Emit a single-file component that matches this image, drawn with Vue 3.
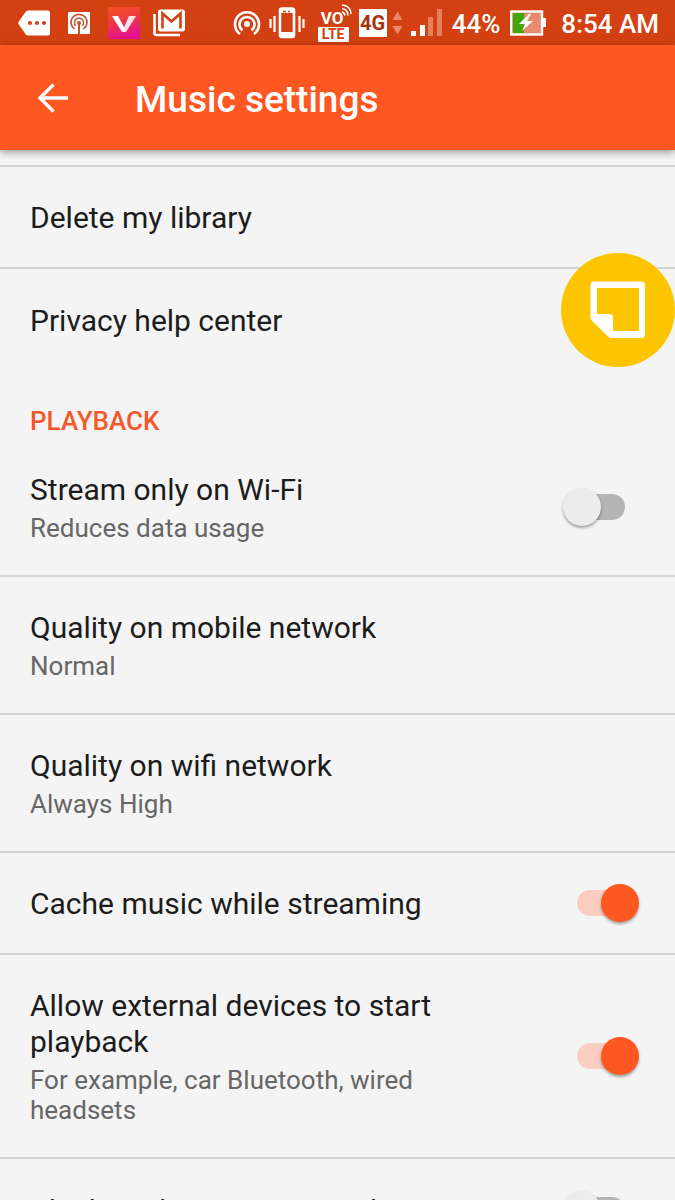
<template>
  <div class="screen">
    <div class="status-bar">
      <div class="status-icons">
        <svg class="icon-tag" width="32" height="26" viewBox="0 0 32 26">
          <path d="M10 0.5H30Q32 0.5 32 2.5V23.5Q32 25.5 30 25.5H10Q8.500 25.500 7.500 24L0.500 14Q0 13 0.500 12L7.500 2Q8.500 0.500 10 0.500Z" fill="#fff" />
          <g fill="#d34113">
            <circle cx="12" cy="13" r="2.100" />
            <circle cx="19" cy="13" r="2.100" />
            <circle cx="26" cy="13" r="2.100" />
          </g>
        </svg>
        <svg class="icon-cast" width="22" height="22" viewBox="0 0 22 22">
          <rect width="22" height="22" rx="1" fill="#fff" />
          <g fill="none" stroke="#c4502c" stroke-width="1.600">
            <path d="M6.500 17A8 8 0 1 1 15.500 17" />
            <path d="M7.800 13.800A4.500 4.500 0 1 1 14.200 13.800" />
            <path d="M11 11V22" stroke-width="2" />
          </g>
          <circle cx="11" cy="11" r="2" fill="#c4502c" />
        </svg>
        <svg class="icon-video" width="32" height="32" viewBox="0 0 32 32">
          <defs>
            <linearGradient id="videoBg" x1="0" y1="0" x2="0.300" y2="1">
              <stop offset="0" stop-color="#f4511e" />
              <stop offset="0.450" stop-color="#ee3d3d" />
              <stop offset="1" stop-color="#e5128f" />
            </linearGradient>
          </defs>
          <rect width="32" height="32" rx="1" fill="url(#videoBg)" />
          <path d="M4 9H10L17 22L14 25Z" fill="#fff" />
          <path d="M21 9H28L18 25H14Z" fill="#ffe3ea" />
        </svg>
        <svg class="icon-mail" width="32" height="28" viewBox="0 0 32 28">
          <path d="M1.500 5V24Q1.500 26 3.500 26H27" fill="none" stroke="#fff" stroke-width="2.600" />
          <rect x="5" y="0.500" width="27" height="22" rx="2.500" fill="#fff" />
          <path d="M9.500 19.500V4.500L18.500 12.500L27.500 4.500V19.500" fill="none" stroke="#d34113" stroke-width="2.600" />
        </svg>
      </div>
      <div class="status-icons">
        <svg class="icon-hotspot" width="28" height="28" viewBox="0 0 28 28">
          <circle cx="14" cy="15" r="3" fill="#fff" />
          <g fill="none" stroke="#fff" stroke-width="2.600">
            <path d="M9.500 21.500A7.500 7.500 0 1 1 18.500 21.500" />
            <path d="M7 25A12 12 0 1 1 21 25" />
          </g>
        </svg>
        <svg class="icon-vibrate" width="36" height="32" viewBox="0 0 36 32">
          <rect x="11" y="1.500" width="14" height="28.500" rx="2" fill="none" stroke="#fff" stroke-width="2.600" />
          <path d="M11 4H25M11 27H25" stroke="#fff" stroke-width="4" />
          <path d="M14 4.500H17M19 4.500H21" stroke="#d34113" stroke-width="1.500" />
          <path d="M1.500 12V21M5.500 9V25M30.500 9V25M34.500 12V21" stroke="#fff" stroke-width="2.200" />
        </svg>
        <div class="volte">
          <svg class="icon-waves" width="11" height="12" viewBox="0 0 11 12">
            <g fill="none" stroke="#fff" stroke-width="1.600">
              <path d="M1 8Q3.500 8.500 4 11.500" />
              <path d="M1 4.500Q6.500 5 7 11.500" />
              <path d="M1 1Q9.500 1.500 10 10" />
            </g>
          </svg>
          <span class="volte-top">VO</span>
          <span class="volte-bottom">LTE</span>
        </div>
        <span class="network-type">4G</span>
        <svg class="icon-arrows" width="11" height="24" viewBox="0 0 11 24">
          <path d="M5.500 0.500L10.500 9H0.500ZM5.500 23.500L0.500 15H10.500Z" fill="#e88a68" />
        </svg>
        <svg class="icon-signal" width="31" height="28" viewBox="0 0 31 28">
          <rect x="0" y="22" width="5" height="5" fill="#fff" />
          <rect x="9" y="16" width="5" height="11" fill="#fff" />
          <rect x="17" y="8" width="5" height="19" fill="#e5805e" />
          <rect x="26" y="0" width="5" height="27" fill="#e5805e" />
        </svg>
        <span class="status-text battery-level">44%</span>
        <svg class="icon-battery" width="36" height="26" viewBox="0 0 36 26">
          <rect x="31" y="8" width="5" height="9" fill="#fff" />
          <rect x="1" y="1.500" width="31" height="23" fill="#e88a70" stroke="#fff" stroke-width="2.400" />
          <rect x="3" y="3" width="11" height="20" fill="#43a60b" />
          <path d="M19 4L9 14H15L12 21L23 11H17L21 4Z" fill="#fff" />
        </svg>
        <span class="status-text">8:54 AM</span>
      </div>
    </div>

    <header class="app-bar">
      <button class="back-button" type="button" aria-label="Back">
        <svg width="30" height="30" viewBox="0 0 30 30">
          <path d="M30 15H2.500M15.500 1.500L2 15L15.500 28.500" fill="none" stroke="#fff" stroke-width="3.400" />
        </svg>
      </button>
      <h1 class="app-title">Music settings</h1>
    </header>

    <main class="settings">
      <section v-for="group in groups" :key="group.id" class="group">
        <h2 v-if="group.title" class="group-title">{{ group.title }}</h2>
        <component
          :is="'value' in item ? 'label' : 'button'"
          v-for="item in group.items"
          :key="item.id"
          class="row"
          :class="{ 'has-summary': item.summary }"
        >
          <span class="row-text">
            <span class="row-title">{{ item.title }}</span>
            <span v-if="item.summary" class="row-summary">{{ item.summary }}</span>
          </span>
          <input v-if="'value' in item" v-model="item.value" class="switch" type="checkbox" role="switch" />
        </component>
      </section>
    </main>

    <button class="note-button" type="button" aria-label="New note">
      <svg width="56" height="58" viewBox="0 0 56 58">
        <path
          d="M4 0.500H51Q55 0.500 55 4.500V53Q55 57 51 57H22Q19.500 57 17.500 55L2 40Q0.500 38.500 0.500 36V4.500Q0.500 0.500 4 0.500ZM7 7V33H20Q23 33 23 36V50H49V7Z"
          fill="#fff"
          fill-rule="evenodd"
        />
      </svg>
    </button>
  </div>
</template>

<script setup>
import { ref } from "vue";

const groups = ref([
  {
    id: "general",
    title: "",
    items: [
      { id: "delete", title: "Delete my library" },
      { id: "privacy", title: "Privacy help center" },
    ],
  },
  {
    id: "playback",
    title: "PLAYBACK",
    items: [
      { id: "wifiOnly", title: "Stream only on Wi-Fi", summary: "Reduces data usage", value: false },
      { id: "mobileQuality", title: "Quality on mobile network", summary: "Normal" },
      { id: "wifiQuality", title: "Quality on wifi network", summary: "Always High" },
      { id: "cache", title: "Cache music while streaming", value: true },
      {
        id: "external",
        title: "Allow external devices to start playback",
        summary: "For example, car Bluetooth, wired headsets",
        value: true,
      },
      { id: "explicit", title: "Block explicit songs in radio", value: false },
    ],
  },
]);
</script>

<style>
body {
  margin: 0;
  background: #f4f4f4;
}
</style>

<style scoped>
.screen {
  display: flex;
  flex-direction: column;
  height: 100vh;
  overflow: hidden;
  background: #f4f4f4;
  font-family: Roboto, "Liberation Sans", sans-serif;
}

.status-bar {
  flex: none;
  display: flex;
  justify-content: space-between;
  height: 45px;
  padding: 0 16px 0 18px;
  background: #d34113;
}

.status-icons {
  display: flex;
  align-items: center;
}

.status-icons svg {
  flex: none;
}

.icon-cast,
.icon-video {
  margin-left: 18px;
}

.icon-mail,
.volte {
  margin-left: 13px;
}

.icon-vibrate,
.icon-signal {
  margin-left: 8px;
}

.network-type,
.battery-level,
.icon-battery {
  margin-left: 10px;
}

.icon-arrows {
  margin-left: 5px;
}

.volte {
  position: relative;
  width: 31px;
  font-weight: 700;
}

.icon-waves {
  position: absolute;
  top: 0;
  right: -3px;
}

.volte-top,
.volte-bottom {
  display: block;
  line-height: 15px;
}

.volte-top {
  padding: 7px 0 1px 3px;
  color: #fff;
  font-size: 17px;
}

.volte-bottom {
  border-radius: 1px;
  background: #fff;
  color: #d34113;
  font-size: 14px;
  text-align: center;
}

.network-type {
  width: 28px;
  height: 28px;
  background: #fff;
  color: #a8300c;
  font-size: 20px;
  font-weight: 700;
  line-height: 28px;
  text-align: center;
}

.status-text {
  padding-top: 3px;
  color: #fff;
  font-size: 26px;
  font-weight: 500;
  line-height: 32px;
  white-space: nowrap;
}

.icon-battery {
  margin-right: 15px;
}

.app-bar {
  flex: none;
  position: relative;
  z-index: 1;
  display: flex;
  align-items: center;
  height: 105px;
  padding: 0 38px;
  box-sizing: border-box;
  background: #ff5722;
  box-shadow: 0 2px 8px rgba(0, 0, 0, 0.4);
}

.back-button {
  display: flex;
  margin-right: 67px;
  padding: 0;
  border: 0;
  background: none;
}

.app-title {
  margin: 0;
  padding-top: 4px;
  color: #fff;
  font-size: 37px;
  font-weight: 500;
  line-height: 44px;
}

.settings {
  flex: 1;
  min-height: 0;
  padding-top: 15px;
  overflow-y: auto;
  scrollbar-width: none;
}

.group:first-child {
  border-top: 2px solid #d4d4d4;
}

.group-title {
  margin: 0;
  padding: 34px 30px 2px;
  color: #f4592a;
  font-size: 26px;
  font-weight: 500;
  line-height: 32px;
}

.row {
  display: flex;
  align-items: center;
  justify-content: space-between;
  gap: 60px;
  box-sizing: border-box;
  width: 100%;
  min-height: 102px;
  padding: 0 36px 0 30px;
  border: 0;
  border-bottom: 2px solid #d4d4d4;
  background: none;
  color: #1c1c1c;
  font-family: inherit;
  text-align: left;
}

.row:last-child {
  border-bottom: 0;
}

.row-text {
  padding-top: 1px;
}

.has-summary .row-text {
  padding: 33px 0 32px;
}

.row-title,
.row-summary {
  display: block;
}

.row-title {
  font-size: 30px;
  line-height: 36px;
}

.row-summary {
  margin-top: 5px;
  color: #666;
  font-size: 26px;
  line-height: 30px;
}

.switch {
  appearance: none;
  flex: none;
  position: relative;
  width: 76px;
  height: 38px;
  margin: 0;
}

.switch::before {
  content: "";
  position: absolute;
  top: 6px;
  left: 14px;
  width: 48px;
  height: 26px;
  border-radius: 13px;
  background: #b4b4b4;
}

.switch::after {
  content: "";
  position: absolute;
  top: 0;
  left: 0;
  width: 38px;
  height: 38px;
  border-radius: 50%;
  background: #ececec;
  box-shadow: 0 2px 3px rgba(0, 0, 0, 0.35);
}

.switch:checked::before {
  background: #f9cdbf;
}

.switch:checked::after {
  left: 38px;
  background: #ff5722;
}

/* floats over the list, docked to the right edge */
.note-button {
  position: fixed;
  top: 253px;
  right: 0;
  z-index: 2;
  display: flex;
  align-items: center;
  justify-content: center;
  width: 114px;
  height: 114px;
  padding: 0;
  border: 0;
  border-radius: 50%;
  background: #fdc500;
}
</style>
